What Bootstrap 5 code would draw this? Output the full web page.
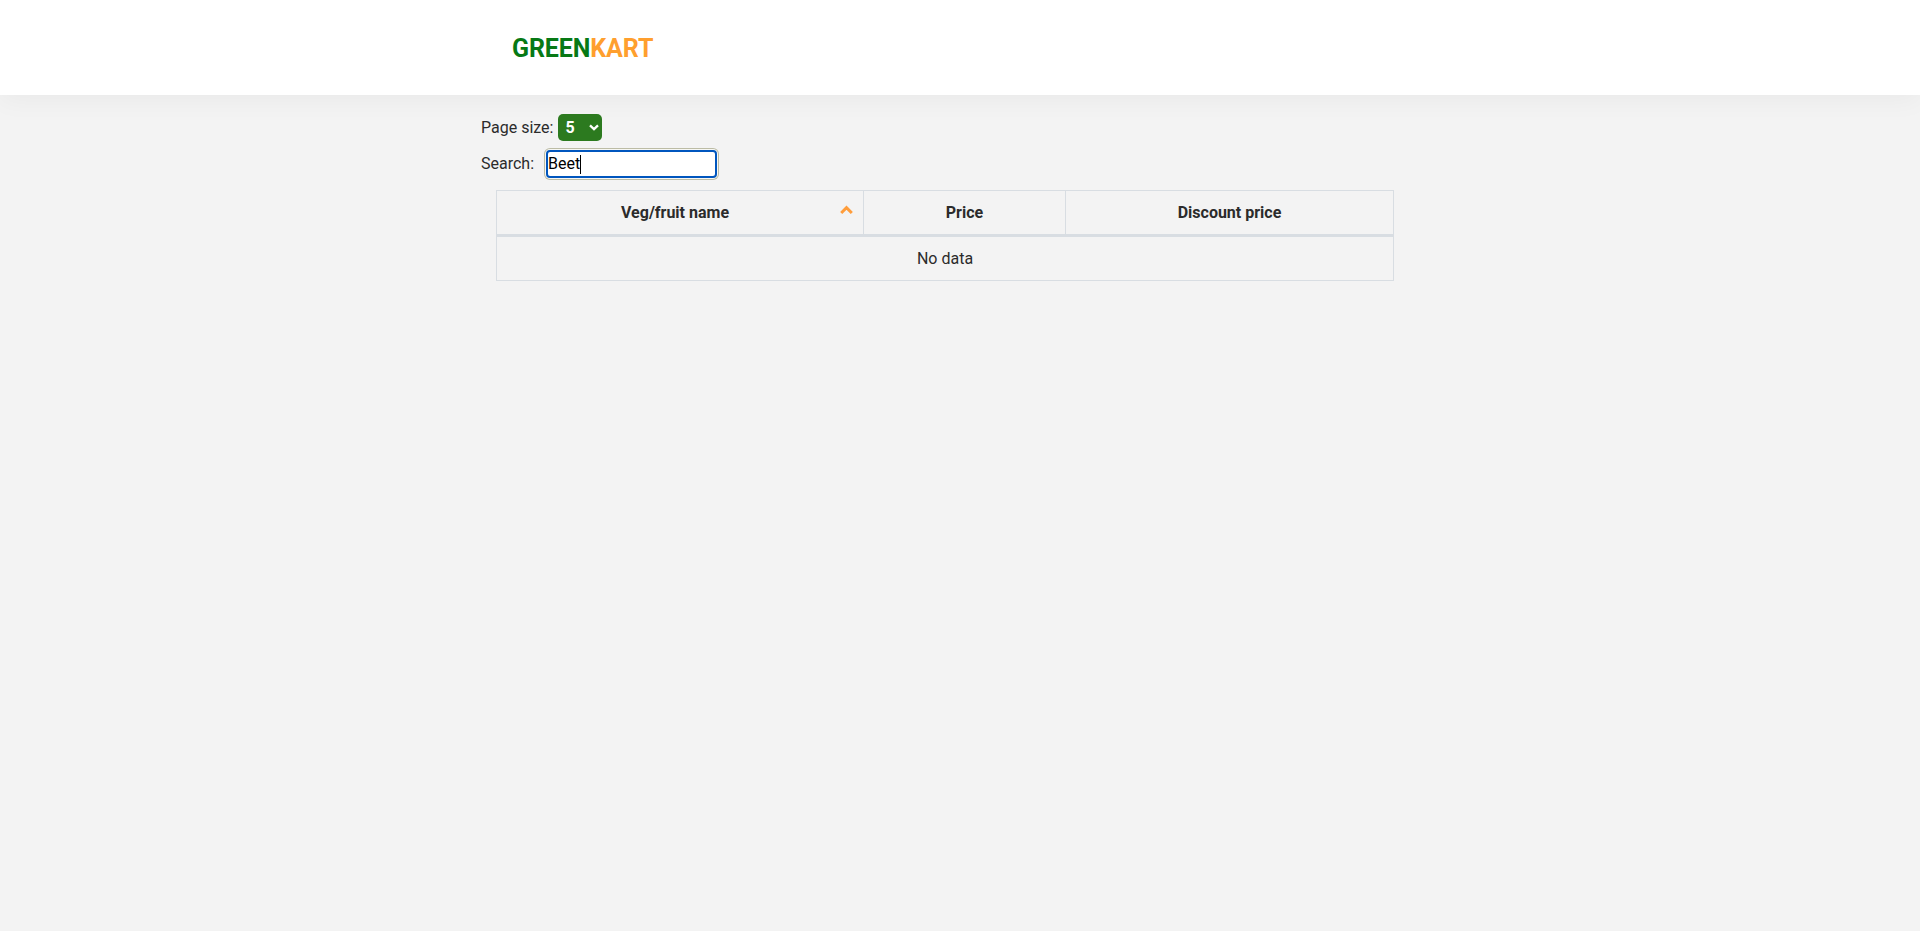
<!DOCTYPE html>
<html lang="en">
<head>
<meta charset="utf-8">
<meta name="viewport" content="width=device-width, initial-scale=1">
<title>GreenKart</title>
<link href="https://cdn.jsdelivr.net/npm/bootstrap@5.3.0/dist/css/bootstrap.min.css" rel="stylesheet">
<style>
body{background:#f3f3f3;color:#2b2b2b;font-family:Roboto,sans-serif;font-size:16px;line-height:24px}
.site-header{height:95px;box-shadow:0 5px 25px rgba(0,0,0,.045)}
.offers{width:958px;margin-left:481px}
.logo{margin-left:31px;font-size:25px;line-height:30px;font-weight:700;color:#077915;letter-spacing:-.1px;padding-top:2px}
.logo span{color:#ff9f2e}
.size-row{height:27px;margin-top:19px}
.size-box{position:relative;width:44px;height:27px;margin-left:5px;background:#2c7a1f;border-radius:5px}
.size-box select{appearance:none;width:100%;height:100%;padding:0 0 0 7px;border:0;background:none;color:#fff;font:700 16px Roboto,sans-serif}
.size-box svg{position:absolute;left:31px;top:10px;pointer-events:none}
.search-row{height:28px;margin-top:9px}
.search-box{width:171px;height:28px;margin-left:12px;background:#fff;border:2px solid #0056be;border-radius:4px;box-shadow:0 0 0 1px #f7f7f3,0 0 0 2px #bcbca5;color:#000;line-height:24px}
.caret{width:1px;height:19px;background:#000}
.offer-table{width:898px;margin:12px 0 0 15px;border:1px solid #d8dde2;table-layout:fixed;border-collapse:separate;border-spacing:0}
.offer-table th,.offer-table td{padding:0;text-align:center;vertical-align:middle}
.offer-table th{height:46px;border-bottom:3px solid #d8dde2;border-right:1px solid #d8dde2}
.offer-table th:last-child{border-right:0}
.offer-table td{height:43px}
.head-cell{position:relative;padding-right:10px}
.head-cell svg{position:absolute;right:10px;top:4px}
</style>
</head>
<body>
<header class="site-header bg-white d-flex align-items-center">
  <div class="offers"><div class="logo">GREEN<span>KART</span></div></div>
</header>
<main class="offers">
  <div class="size-row d-flex align-items-center">
    <label for="page-size">Page size:</label>
    <div class="size-box">
      <select id="page-size"><option>5</option><option>10</option><option>20</option></select>
      <svg width="10" height="8" viewBox="0 0 10 8" fill="none" stroke="#fff" stroke-width="2.3"><path d="M1 1.4 5 5.2 9 1.4"/></svg>
    </div>
  </div>
  <div class="search-row d-flex align-items-center">
    <span>Search:</span>
    <div class="search-box d-flex align-items-center" role="textbox" tabindex="0"><span class="typed">Beet</span><i class="caret"></i></div>
  </div>
  <table class="offer-table">
    <colgroup><col style="width:367px"><col style="width:202px"><col style="width:327px"></colgroup>
    <thead><tr>
      <th><div class="head-cell">Veg/fruit name<svg width="13" height="10" viewBox="0 0 13 10" fill="none" stroke="#ff9d3b" stroke-width="3"><path d="M1.2 8 6.5 2.7 11.8 8"/></svg></div></th>
      <th>Price</th>
      <th>Discount price</th>
    </tr></thead>
    <tbody><tr><td colspan="3">No data</td></tr></tbody>
  </table>
</main>
<script src="https://cdn.jsdelivr.net/npm/bootstrap@5.3.0/dist/js/bootstrap.bundle.min.js"></script>
</body>
</html>
